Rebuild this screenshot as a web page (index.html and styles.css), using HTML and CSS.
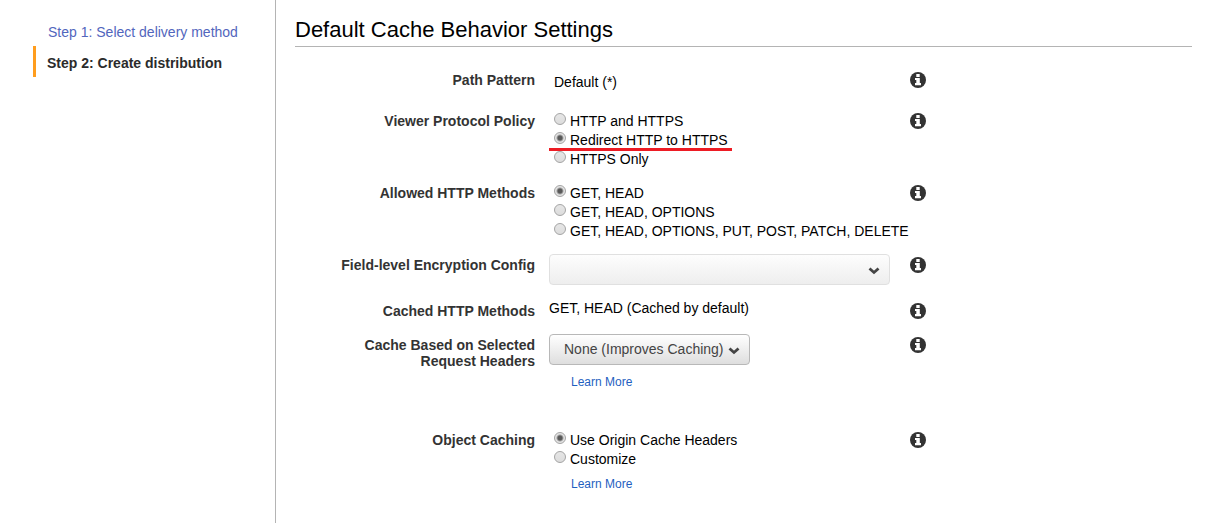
FILE: index.html
```html
<!DOCTYPE html>
<html lang="en">
<head>
<meta charset="utf-8">
<title>Create distribution</title>
<link rel="stylesheet" href="styles.css">
</head>
<body>
<svg class="symbols" aria-hidden="true">
  <symbol id="info" viewBox="0 0 16 16">
    <circle cx="8" cy="8" r="8" fill="#333"/>
    <path d="M6.300 2h3.400v3H6.300zM5 6h4.800v5h1.200v2.300H5V11h1.300V8H5z" fill="#fff"/>
  </symbol>
  <symbol id="chevron" viewBox="0 0 12 8">
    <path d="M1.500 1.500L6 5.500l4.500-4" fill="none" stroke="#444" stroke-width="2.800"/>
  </symbol>
</svg>
<div class="layout">
  <nav class="steps">
    <a class="step" href="#step1">Step 1: Select delivery method</a>
    <a class="step current" href="#step2" aria-current="step">Step 2: Create distribution</a>
  </nav>
  <main class="content">
    <h1 class="title">Default Cache Behavior Settings</h1>
    <form class="settings">
      <div class="row">
        <div class="name">Path Pattern</div>
        <div class="value inset">Default (*)</div>
        <button class="info" type="button" aria-label="About path pattern"><svg><use href="#info"/></svg></button>
      </div>
      <div class="row" role="radiogroup" aria-labelledby="policy">
        <div class="name" id="policy">Viewer Protocol Policy</div>
        <div class="options">
          <label class="option"><input type="radio" name="policy">HTTP and HTTPS</label>
          <label class="option marked"><input type="radio" name="policy" checked>Redirect HTTP to HTTPS</label>
          <label class="option"><input type="radio" name="policy">HTTPS Only</label>
        </div>
        <button class="info" type="button" aria-label="About viewer protocol policy"><svg><use href="#info"/></svg></button>
      </div>
      <div class="row" role="radiogroup" aria-labelledby="methods">
        <div class="name" id="methods">Allowed HTTP Methods</div>
        <div class="options">
          <label class="option"><input type="radio" name="methods" checked>GET, HEAD</label>
          <label class="option"><input type="radio" name="methods">GET, HEAD, OPTIONS</label>
          <label class="option"><input type="radio" name="methods">GET, HEAD, OPTIONS, PUT, POST, PATCH, DELETE</label>
        </div>
        <button class="info" type="button" aria-label="About allowed HTTP methods"><svg><use href="#info"/></svg></button>
      </div>
      <div class="row select-row">
        <label class="name" for="encryption">Field-level Encryption Config</label>
        <div class="picker wide">
          <select id="encryption" disabled><option></option></select>
          <svg class="chevron"><use href="#chevron"/></svg>
        </div>
        <button class="info" type="button" aria-label="About field-level encryption"><svg><use href="#info"/></svg></button>
      </div>
      <div class="row cached">
        <div class="name">Cached HTTP Methods</div>
        <div class="value">GET, HEAD (Cached by default)</div>
        <button class="info" type="button" aria-label="About cached HTTP methods"><svg><use href="#info"/></svg></button>
      </div>
      <div class="row select-row headers">
        <label class="name narrow" for="headers">Cache Based on Selected Request Headers</label>
        <div class="stack">
          <div class="picker">
            <select id="headers"><option>None (Improves Caching)</option></select>
            <svg class="chevron"><use href="#chevron"/></svg>
          </div>
          <a class="more" href="#headers-help">Learn More</a>
        </div>
        <button class="info" type="button" aria-label="About request headers"><svg><use href="#info"/></svg></button>
      </div>
      <div class="row" role="radiogroup" aria-labelledby="caching">
        <div class="name" id="caching">Object Caching</div>
        <div class="stack">
          <div class="options">
            <label class="option"><input type="radio" name="caching" checked>Use Origin Cache Headers</label>
            <label class="option"><input type="radio" name="caching">Customize</label>
          </div>
          <a class="more" href="#caching-help">Learn More</a>
        </div>
        <button class="info" type="button" aria-label="About object caching"><svg><use href="#info"/></svg></button>
      </div>
    </form>
  </main>
</div>
</body>
</html>
```
FILE: styles.css
```css
* { box-sizing: border-box; }
body {
  margin: 0;
  background: #fff;
  color: #000;
  font: 14px/19px "Liberation Sans", Arial, sans-serif;
}
a { text-decoration: none; }
.symbols { display: none; }
.layout {
  display: grid;
  grid-template-columns: 276px 1fr;
  min-height: 100vh;
}
.steps {
  display: flex;
  flex-direction: column;
  gap: 4px;
  padding: 23px 12px 0 33px;
  border-right: 1px solid #b4b4b4;
}
.step {
  padding-left: 15px;
  color: #5266bd;
  white-space: nowrap;
}
.step.current {
  padding: 8px 0 4px 11px;
  border-left: 3px solid #ff9d1e;
  color: #2b2b2b;
  font-weight: bold;
}
.content { padding: 15px 13px 20px 19px; }
.title {
  margin: 0;
  padding-bottom: 1px;
  border-bottom: 1px solid #b4b4b4;
  font-size: 22px;
  font-weight: normal;
  line-height: 30px;
}
.settings {
  display: flex;
  flex-direction: column;
  gap: 15px;
  padding-top: 24px;
}
.row {
  display: grid;
  grid-template-columns: 240px 341px 22px;
  align-items: start;
  column-gap: 14px;
  --label-top: 1px;
}
.name {
  justify-self: end;
  padding-top: var(--label-top);
  color: #333;
  font-weight: bold;
  line-height: 16px;
  text-align: right;
}
.name.narrow { max-width: 190px; }
.info {
  justify-self: end;
  margin: var(--label-top) 0 0;
  padding: 0;
  border: 0;
  background: none;
  line-height: 0;
}
.info svg { width: 16px; height: 16px; }
.inset {
  padding: 2px 5px 5px;
}
.options {
  display: flex;
  flex-direction: column;
  align-items: flex-start;
  padding-left: 5px;
}
.option {
  display: flex;
  position: relative;
  gap: 4px;
  white-space: nowrap;
}
.option input {
  appearance: none;
  width: 12px;
  height: 12px;
  margin: 1px 0 0;
  border: 1px solid #a4a4a4;
  border-radius: 50%;
  background: linear-gradient(#e6e6e6, #dcdcdc);
}
.option input:checked {
  background: radial-gradient(circle, #595959 0 2px, #e4e4e4 4px);
}
.marked::after {
  position: absolute;
  right: -4px;
  bottom: -1px;
  left: -5px;
  height: 3px;
  background: #ed1c24;
  content: "";
}
.select-row { --label-top: 3px; }
.select-row:not(.headers) { margin-top: -2px; }
.cached {
  --label-top: 4px;
  margin-top: -1px;
}
.headers { padding-bottom: 24px; }
.headers .stack { gap: 8px; }
.picker {
  display: grid;
  align-items: center;
  width: 201px;
}
.picker.wide { width: 100%; }
.picker > * { grid-area: 1 / 1; }
.picker select {
  appearance: none;
  width: 100%;
  height: 31px;
  margin: 0;
  padding: 0 24px 0 14px;
  border: 1px solid #b8b8b8;
  border-radius: 4px;
  background: linear-gradient(#fff, #dedede);
  color: #444;
  font: inherit;
  opacity: 1;
}
.picker select:disabled {
  border-color: #e0e0e0;
  background: linear-gradient(#fdfdfd, #eee);
}
.chevron {
  justify-self: end;
  width: 12px;
  height: 8px;
  margin: 3px 10px 0 0;
  pointer-events: none;
}
.stack {
  display: flex;
  flex-direction: column;
  align-items: flex-start;
  gap: 6px;
}
.more {
  margin-left: 22px;
  color: #1f5fbf;
  font-size: 12px;
}
```
